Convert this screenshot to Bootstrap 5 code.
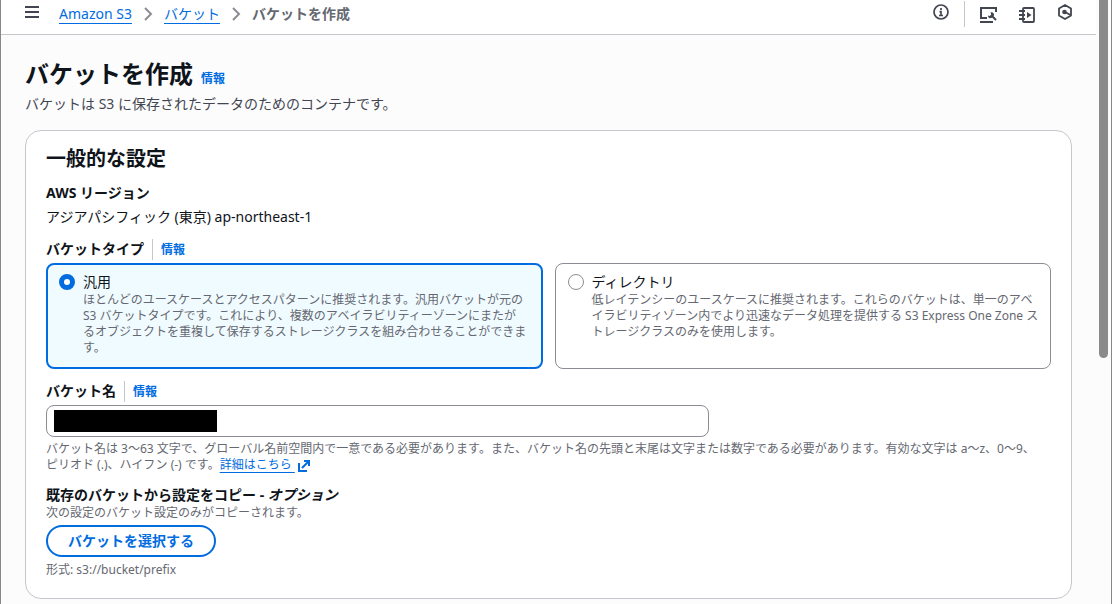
<!DOCTYPE html>
<html lang="ja">
<head>
<meta charset="utf-8">
<meta name="viewport" content="width=device-width, initial-scale=1">
<title>バケットを作成 - Amazon S3</title>
<link href="https://cdn.jsdelivr.net/npm/bootstrap@5.3.0/dist/css/bootstrap.min.css" rel="stylesheet">
<style>
  body { font-family: "Noto Sans", "Noto Sans CJK JP", sans-serif; font-size: 14px; line-height: 20px; color: #0f141a; background: #fcfcfd; }
  a { color: #006ce0; }
  .app-shell { border-left: 1px solid #888; }
  .topbar { height: 35px; padding: 0 23px 6px 24px; background: #fff; border-bottom: 1px solid #c6c6cd; }
  .icon-btn { padding: 0; border: 0; background: none; color: #424650; line-height: 0; }
  .menu-btn { margin-right: 20px; }
  .breadcrumb { gap: 9px; }
  .breadcrumb a { text-decoration: none; border-bottom: 1px solid #006ce0; line-height: 18px; display: block; }
  .breadcrumb .crumb-current { color: #656871; font-weight: 700; }
  .tools { gap: 22px; }
  .tool-rule { width: 1px; height: 26px; background: #c6c6cd; margin: 0 -7px 0 -7px; }
  .page-body { padding: 24px 24px 5px; }
  h1 { font-size: 24px; line-height: 30px; font-weight: 700; }
  h2 { font-size: 20px; line-height: 24px; font-weight: 700; }
  .info-link { font-size: 12px; font-weight: 700; text-decoration: none; }
  .lead-text { color: #424650; margin: 5px 0 16px; }
  .panel { border: 1px solid #c6c6cd; border-radius: 16px; background: #fff; padding: 16px 20px 20px; }
  .field-label { font-size: 14px; line-height: 20px; font-weight: 700; }
  .label-split { padding-left: 8px; margin-left: 8px; border-left: 1px solid #c6c6cd; }
  .hint { font-size: 12px; line-height: 16px; color: #656871; }
  .field { margin-top: 12px; }
  .tiles { gap: 12px; margin-top: 3px; }
  .tile { flex: 1 1 0; min-width: 0; gap: 8px; padding: 8px 8px 12px 12px; border: 1px solid #8c8c94; border-radius: 8px; }
  .tile:has(:checked) { border: 2px solid #006ce0; background: #f0fbff; padding: 7px 7px 11px 11px; }
  .tile .form-check-input { flex: none; width: 16px; height: 16px; margin: 2px 0 0; border: 1px solid #8c8c94; }
  .tile .form-check-input:checked { border: 5px solid #006ce0; background: #fff; }
  .name-box { position: relative; margin: 3px 0 4px; }
  .name-input { width: 66%; height: 32px; border: 1px solid #8c8c94; border-radius: 8px; padding: 4px 7px; }
  .redaction { position: absolute; left: 8px; top: 5px; width: 163px; height: 22px; background: #000; }
  .more-link { text-decoration: underline; text-decoration-thickness: 1px; text-underline-offset: 3px; }
  .pill-btn { border: 2px solid #006ce0; border-radius: 20px; color: #006ce0; background: #fff; font-size: 14px; line-height: 20px; font-weight: 700; padding: 4px 20px; margin: 4px 0 5px; }
  .scroll-rail { width: 16px; border-right: 1px solid #888; padding-left: 3px; }
  .scroll-thumb { width: 9px; height: 358px; background: #8b8b8b; border-radius: 0 0 5px 5px; }
</style>
</head>
<body>
<div class="app-shell d-flex min-vh-100">
  <div class="flex-grow-1">
    <header class="topbar d-flex align-items-center">
      <button class="icon-btn menu-btn" type="button" aria-label="メニュー">
        <svg width="14" height="20" viewBox="0 0 14 20" fill="none" stroke="currentColor" stroke-width="2"><path d="M0 3h14M0 8h14M0 13h14"/></svg>
      </button>
      <nav aria-label="パンくず">
        <ol class="breadcrumb align-items-center mb-0">
          <li><a href="#">Amazon S3</a></li>
          <li class="d-flex" aria-hidden="true"><svg width="14" height="16" viewBox="0 0 14 16" fill="none" stroke="#8c8c94" stroke-width="2"><path d="M4 2l6 6-6 6"/></svg></li>
          <li><a href="#">バケット</a></li>
          <li class="d-flex" aria-hidden="true"><svg width="14" height="16" viewBox="0 0 14 16" fill="none" stroke="#8c8c94" stroke-width="2"><path d="M4 2l6 6-6 6"/></svg></li>
          <li class="crumb-current" aria-current="page">バケットを作成</li>
        </ol>
      </nav>
      <div class="tools d-flex align-items-center ms-auto">
        <button class="icon-btn" type="button" aria-label="情報"><svg width="16" height="20" viewBox="0 0 16 20" fill="none" stroke="currentColor" stroke-width="1.700"><circle cx="8" cy="8" r="7"/><path d="M8 4v2M6.500 7.700H8V11M6 11.500h4"/></svg></button>
        <span class="tool-rule"></span>
        <button class="icon-btn" type="button" aria-label="ツール"><svg width="17" height="20" viewBox="0 0 17 20" fill="none" stroke="currentColor" stroke-width="2"><path d="M7 14H1V4h15v4M0 18h13"/><path d="M11 11l5 5"/><path d="M8 11.500L10 12l1.200-1.200L10.500 8.500c2-.7 4 .8 3.500 3l-2.500 2.500c-2 .6-3.700-.5-3.500-2.500z" fill="currentColor" stroke="none"/></svg></button>
        <button class="icon-btn" type="button" aria-label="チュートリアル"><svg width="16" height="20" viewBox="0 0 16 20" fill="none" stroke="currentColor" stroke-width="1.800"><rect x="4" y="4" width="11" height="14" rx="1"/><path d="M0 7h6M0 11h6M0 15h6"/><path d="M8 8l4.500 3L8 14z" fill="currentColor" stroke="none"/></svg></button>
        <button class="icon-btn" type="button" aria-label="アシスタント"><svg width="16" height="20" viewBox="0 0 16 20" fill="none" stroke="currentColor" stroke-width="1.800" stroke-linejoin="round"><path d="M8 1l6 3.500v7L8 15l-6-3.500v-7z"/><circle cx="7.500" cy="8" r="2.300" fill="currentColor" stroke="none"/><path d="M8 8l5.500 3"/></svg></button>
      </div>
    </header>

    <main class="page-body">
      <div class="d-flex align-items-baseline gap-2">
        <h1 class="mb-0">バケットを作成</h1><a class="info-link" href="#">情報</a>
      </div>
      <p class="lead-text">バケットは S3 に保存されたデータのためのコンテナです。</p>

      <form class="panel">
        <h2 class="mb-0">一般的な設定</h2>
        <div class="field">
          <div class="field-label">AWS リージョン</div>
          <div class="mt-1">アジアパシフィック (東京) ap-northeast-1</div>
        </div>

        <fieldset class="field">
          <div class="d-flex">
            <span class="field-label" id="type-label">バケットタイプ</span>
            <span class="label-split"><a class="info-link" href="#">情報</a></span>
          </div>
          <div class="tiles d-flex" role="radiogroup" aria-labelledby="type-label">
            <label class="tile d-flex">
              <input class="form-check-input" type="radio" name="type" checked>
              <span><span class="d-block">汎用</span>
              <span class="hint d-block">ほとんどのユースケースとアクセスパターンに推奨されます。汎用バケットが元の S3 バケットタイプです。これにより、複数のアベイラビリティーゾーンにまたが<br>るオブジェクトを重複して保存するストレージクラスを組み合わせることができます。</span></span>
            </label>
            <label class="tile d-flex">
              <input class="form-check-input" type="radio" name="type">
              <span><span class="d-block">ディレクトリ</span>
              <span class="hint d-block">低レイテンシーのユースケースに推奨されます。これらのバケットは、単一のアベイラビリティゾーン内でより迅速なデータ処理を提供する S3 Express One Zone ストレージクラスのみを使用します。</span></span>
            </label>
          </div>
        </fieldset>

        <div class="field">
          <div class="d-flex">
            <label class="field-label" for="bucket-name">バケット名</label>
            <span class="label-split"><a class="info-link" href="#">情報</a></span>
          </div>
          <div class="name-box d-flex">
            <input class="name-input" id="bucket-name" type="text">
            <span class="redaction"></span>
          </div>
          <div class="hint">バケット名は 3～63 文字で、グローバル名前空間内で一意である必要があります。また、バケット名の先頭と末尾は文字または数字である必要があります。有効な文字は a～z、0～9、<br>ピリオド (.)、ハイフン (-) です。<a class="more-link" href="#">詳細はこちら&nbsp;</a>
            <svg width="12" height="12" viewBox="0 0 12 12" fill="none" stroke="#006ce0" stroke-width="2" aria-hidden="true"><path d="M6 1h5v5M11 1L4 8M1 3v8h8"/></svg>
          </div>
        </div>

        <div class="field">
          <div class="field-label">既存のバケットから設定をコピー - <em>オプション</em></div>
          <div class="hint">次の設定のバケット設定のみがコピーされます。</div>
          <button class="pill-btn" type="button">バケットを選択する</button>
          <div class="hint">形式: s3://bucket/prefix</div>
        </div>
      </form>
    </main>
  </div>
  <div class="scroll-rail flex-shrink-0" aria-hidden="true"><div class="scroll-thumb"></div></div>
</div>
<script src="https://cdn.jsdelivr.net/npm/bootstrap@5.3.0/dist/js/bootstrap.bundle.min.js"></script>
</body>
</html>
